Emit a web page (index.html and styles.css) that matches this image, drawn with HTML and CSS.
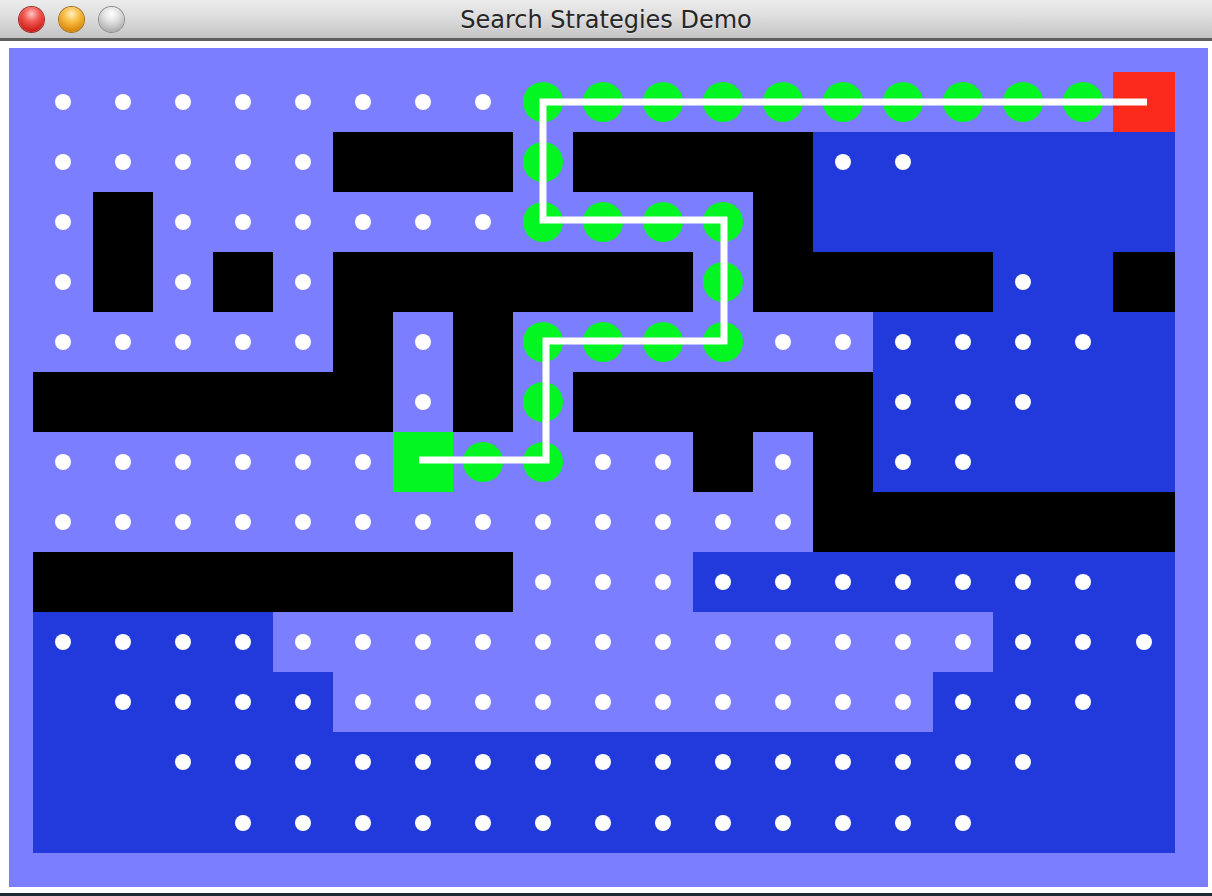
FILE: index.html
```html
<!DOCTYPE html>
<html>
<head>
<meta charset="utf-8">
<title>Search Strategies Demo</title>
<link rel="stylesheet" href="styles.css">
</head>
<body>
<div class="window">
  <div class="titlebar">
    <div class="lights">
      <span class="light close"></span>
      <span class="light min"></span>
      <span class="light zoom"></span>
    </div>
    <div class="title">Search Strategies Demo</div>
    <div></div>
  </div>
  <div class="content">
    <div class="panel">
      <div class="grid">
        <!-- row 0 -->
        <i class="l p"></i><i class="l p"></i><i class="l p"></i><i class="l p"></i><i class="l p"></i><i class="l p"></i><i class="l p"></i><i class="l p"></i><i class="l g"></i><i class="l g"></i><i class="l g"></i><i class="l g"></i><i class="l g"></i><i class="l g"></i><i class="l g"></i><i class="l g"></i><i class="l g"></i><i class="l g"></i><i class="r"></i>
        <!-- row 1 -->
        <i class="l p"></i><i class="l p"></i><i class="l p"></i><i class="l p"></i><i class="l p"></i><i class="w"></i><i class="w"></i><i class="w"></i><i class="l g"></i><i class="w"></i><i class="w"></i><i class="w"></i><i class="w"></i><i class="d p"></i><i class="d p"></i><i class="d"></i><i class="d"></i><i class="d"></i><i class="d"></i>
        <!-- row 2 -->
        <i class="l p"></i><i class="w"></i><i class="l p"></i><i class="l p"></i><i class="l p"></i><i class="l p"></i><i class="l p"></i><i class="l p"></i><i class="l g"></i><i class="l g"></i><i class="l g"></i><i class="l g"></i><i class="w"></i><i class="d"></i><i class="d"></i><i class="d"></i><i class="d"></i><i class="d"></i><i class="d"></i>
        <!-- row 3 -->
        <i class="l p"></i><i class="w"></i><i class="l p"></i><i class="w"></i><i class="l p"></i><i class="w"></i><i class="w"></i><i class="w"></i><i class="w"></i><i class="w"></i><i class="w"></i><i class="l g"></i><i class="w"></i><i class="w"></i><i class="w"></i><i class="w"></i><i class="d p"></i><i class="d"></i><i class="w"></i>
        <!-- row 4 -->
        <i class="l p"></i><i class="l p"></i><i class="l p"></i><i class="l p"></i><i class="l p"></i><i class="w"></i><i class="l p"></i><i class="w"></i><i class="l g"></i><i class="l g"></i><i class="l g"></i><i class="l g"></i><i class="l p"></i><i class="l p"></i><i class="d p"></i><i class="d p"></i><i class="d p"></i><i class="d p"></i><i class="d"></i>
        <!-- row 5 -->
        <i class="w"></i><i class="w"></i><i class="w"></i><i class="w"></i><i class="w"></i><i class="w"></i><i class="l p"></i><i class="w"></i><i class="l g"></i><i class="w"></i><i class="w"></i><i class="w"></i><i class="w"></i><i class="w"></i><i class="d p"></i><i class="d p"></i><i class="d p"></i><i class="d"></i><i class="d"></i>
        <!-- row 6 -->
        <i class="l p"></i><i class="l p"></i><i class="l p"></i><i class="l p"></i><i class="l p"></i><i class="l p"></i><i class="s"></i><i class="l g"></i><i class="l g"></i><i class="l p"></i><i class="l p"></i><i class="w"></i><i class="l p"></i><i class="w"></i><i class="d p"></i><i class="d p"></i><i class="d"></i><i class="d"></i><i class="d"></i>
        <!-- row 7 -->
        <i class="l p"></i><i class="l p"></i><i class="l p"></i><i class="l p"></i><i class="l p"></i><i class="l p"></i><i class="l p"></i><i class="l p"></i><i class="l p"></i><i class="l p"></i><i class="l p"></i><i class="l p"></i><i class="l p"></i><i class="w"></i><i class="w"></i><i class="w"></i><i class="w"></i><i class="w"></i><i class="w"></i>
        <!-- row 8 -->
        <i class="w"></i><i class="w"></i><i class="w"></i><i class="w"></i><i class="w"></i><i class="w"></i><i class="w"></i><i class="w"></i><i class="l p"></i><i class="l p"></i><i class="l p"></i><i class="d p"></i><i class="d p"></i><i class="d p"></i><i class="d p"></i><i class="d p"></i><i class="d p"></i><i class="d p"></i><i class="d"></i>
        <!-- row 9 -->
        <i class="d p"></i><i class="d p"></i><i class="d p"></i><i class="d p"></i><i class="l p"></i><i class="l p"></i><i class="l p"></i><i class="l p"></i><i class="l p"></i><i class="l p"></i><i class="l p"></i><i class="l p"></i><i class="l p"></i><i class="l p"></i><i class="l p"></i><i class="l p"></i><i class="d p"></i><i class="d p"></i><i class="d p"></i>
        <!-- row 10 -->
        <i class="d"></i><i class="d p"></i><i class="d p"></i><i class="d p"></i><i class="d p"></i><i class="l p"></i><i class="l p"></i><i class="l p"></i><i class="l p"></i><i class="l p"></i><i class="l p"></i><i class="l p"></i><i class="l p"></i><i class="l p"></i><i class="l p"></i><i class="d p"></i><i class="d p"></i><i class="d p"></i><i class="d"></i>
        <!-- row 11 -->
        <i class="d"></i><i class="d"></i><i class="d p"></i><i class="d p"></i><i class="d p"></i><i class="d p"></i><i class="d p"></i><i class="d p"></i><i class="d p"></i><i class="d p"></i><i class="d p"></i><i class="d p"></i><i class="d p"></i><i class="d p"></i><i class="d p"></i><i class="d p"></i><i class="d p"></i><i class="d"></i><i class="d"></i>
        <!-- row 12 -->
        <i class="d"></i><i class="d"></i><i class="d"></i><i class="d p"></i><i class="d p"></i><i class="d p"></i><i class="d p"></i><i class="d p"></i><i class="d p"></i><i class="d p"></i><i class="d p"></i><i class="d p"></i><i class="d p"></i><i class="d p"></i><i class="d p"></i><i class="d p"></i><i class="d"></i><i class="d"></i><i class="d"></i>

        <svg class="path" width="1142" height="781" viewBox="0 0 1142 781">
          <polyline points="386,388 513,388 513,269 691,269 691,148 510,148 510,30 1114,30" fill="none" stroke="#ffffff" stroke-width="7" stroke-linejoin="miter" stroke-linecap="butt"/>
        </svg>
      </div>
    </div>
  </div>
  <div class="desk"></div>
</div>
</body>
</html>
```

FILE: styles.css
```css
* { box-sizing: border-box; }

html, body {
  margin: 0;
  padding: 0;
  background: #ffffff;
}

.window {
  width: 1212px;
  height: 896px;
  display: flex;
  flex-direction: column;
  background: #ffffff;
  overflow: hidden;
}

.titlebar {
  height: 41px;
  flex: 0 0 41px;
  display: grid;
  grid-template-columns: 1fr auto 1fr;
  align-items: center;
  background: linear-gradient(to bottom, #ececec 0%, #dddddd 45%, #c4c4c4 100%);
  border-bottom: 3px solid #5e5e5e;
}

.lights {
  display: flex;
  gap: 15px;
  padding-left: 19px;
  align-items: center;
  padding-top: 1px;
}

.light {
  width: 25px;
  height: 25px;
  border-radius: 50%;
  display: block;
}

.light.close {
  background: radial-gradient(circle at 50% 28%, #ffc4c4 0%, #f25a54 35%, #d0201a 75%, #8e1a16 100%);
  box-shadow: 0 0 0 1px #9a2a26, 0 1px 1px rgba(255,255,255,0.6);
}

.light.min {
  background: radial-gradient(circle at 50% 28%, #fff0c0 0%, #f8bf48 35%, #dc8a0c 75%, #a56a10 100%);
  box-shadow: 0 0 0 1px #a0721c, 0 1px 1px rgba(255,255,255,0.6);
}

.light.zoom {
  background: radial-gradient(circle at 50% 28%, #ffffff 0%, #e2e2e2 35%, #b4b4b4 75%, #8a8a8a 100%);
  box-shadow: 0 0 0 1px #8c8c8c, 0 1px 1px rgba(255,255,255,0.6);
}

.title {
  font-family: "DejaVu Sans", "Liberation Sans", sans-serif;
  font-size: 24px;
  color: #262626;
  text-shadow: 0 1px 0 rgba(255,255,255,0.5);
  white-space: nowrap;
  padding-top: 1px;
}

.content {
  flex: 0 0 auto;
  padding: 7px 0 0 9px;
}

.panel {
  width: 1199px;
  height: 839px;
  background: #7b7fff;
  padding: 24px 0 0 24px;
}

.grid {
  position: relative;
  display: grid;
  grid-template-columns: repeat(18, 60px) 62px;
  grid-template-rows: repeat(12, 60px) 61px;
  width: 1142px;
  height: 781px;
}

.grid i {
  display: flex;
  align-items: center;
  justify-content: center;
}

.l { background: #7b7fff; }
.d { background: #223adb; }
.w { background: #000000; }
.s { background: #03f522; }
.r { background: #fc2a1b; }

.p::after {
  content: "";
  width: 16px;
  height: 16px;
  border-radius: 50%;
  background: #ffffff;
}

.g::after {
  content: "";
  width: 40px;
  height: 40px;
  border-radius: 50%;
  background: #03f522;
}

.path {
  position: absolute;
  left: 0;
  top: 0;
}

.desk {
  margin-top: auto;
  height: 3px;
  background: #1c2b30;
}
```
